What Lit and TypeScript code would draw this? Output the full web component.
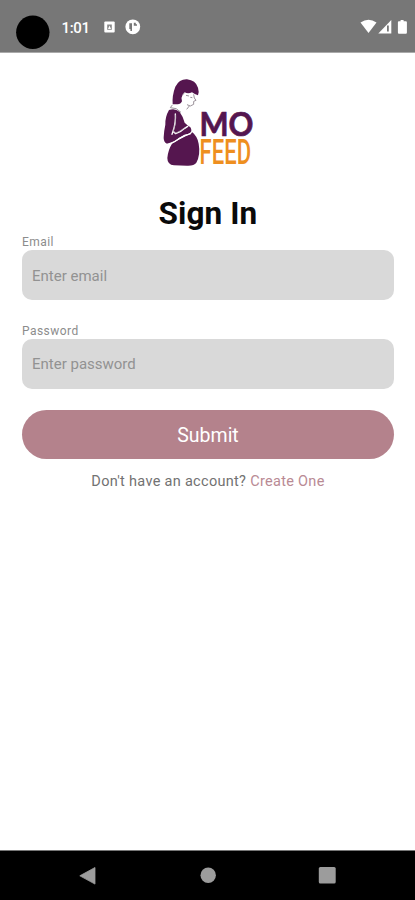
import { LitElement, html, css } from "lit";
import { customElement } from "lit/decorators.js";

@customElement("app-root")
export class AppRoot extends LitElement {
  static styles = css`
    :host {
      display: flex;
      flex-direction: column;
      height: 900px;
      width: 415px;
      background: #fff;
      font-family: Roboto, "Liberation Sans", sans-serif;
      overflow: hidden;
    }
    * { box-sizing: border-box; }
    svg { display: block; overflow: visible; }
    .status {
      flex: none;
      height: 53px;
      background: #777;
      border-bottom: 1px solid #aaa;
    }
    .clock {
      font: 500 15px Roboto, sans-serif;
      fill: #fff;
    }
    main {
      flex: 1;
      display: flex;
      flex-direction: column;
      padding: 23px 21px 0 22px;
    }
    .logo { align-self: center; }
    .mo { font: 700 33px Lato, sans-serif; fill: #55164f; stroke: #55164f; stroke-width: 0.7px; }
    .feed { font: 500 35px Roboto, sans-serif; fill: #ee8f1f; }
    h1 {
      margin: 24px 0 0;
      height: 41px;
      line-height: 39px;
      font-size: 31.5px;
      font-weight: 700;
      text-align: center;
      color: #0a0a0a;
      letter-spacing: 0.1px;
    }
    label {
      display: block;
      height: 15px;
      line-height: 15px;
      font-size: 12px;
      letter-spacing: 0.45px;
      color: #8c8c8c;
    }
    input {
      display: block;
      width: 100%;
      height: 50px;
      margin: 0 0 23.5px;
      padding: 1px 10px 0;
      border: 0;
      border-radius: 10px;
      background: #d9d9d9;
      font: 400 15px Roboto, sans-serif;
      letter-spacing: 0;
    }
    input::placeholder { color: #929292; opacity: 1; }
    button {
      height: 49px;
      margin-top: -2px;
      padding: 2px 0 0;
      border: 0;
      border-radius: 25px;
      background: #b4828c;
      color: #fff;
      font: 400 19.5px Roboto, sans-serif;
      letter-spacing: 0;
    }
    .signup {
      margin: 13px 0 0;
      line-height: 20px;
      font-size: 14.5px;
      letter-spacing: 0.3px;
      text-align: center;
      color: #727272;
    }
    .signup span { color: #b98a94; }
    nav {
      flex: none;
      height: 50px;
      background: #000;
      border-top: 1px solid #777;
    }
  `;

  render() {
    return html`
      <header class="status">
        <svg width="415" height="52" viewBox="0 0 415 52">
          <circle cx="32.8" cy="32.3" r="16.7" fill="#000" />
          <text class="clock" x="61.5" y="32.5" textLength="28.5">1:01</text>
          <rect x="104.3" y="21.5" width="10.4" height="11" rx="1" fill="#fff" />
          <path d="M107.2 29.8V24.5h4.6v5.3z" fill="#888" />
          <path d="M108 29l1.5-3.4 1.5 3.4z" fill="#fff" />
          <circle cx="132.8" cy="26.8" r="7.4" fill="#fff" />
          <path d="M129.3 23.2h2.7v7.8h-1.6v-2h-1.1zM133.8 22.8h2v1.4h1.2v1.6h-3.2z" fill="#777" />
          <path d="M360.5 22.4q8-5.4 16 0L368.5 33z" fill="#fff" />
          <path d="M378.3 33.5L391.3 20v13.5z" fill="#fff" />
          <path d="M387 25.5h1.8v6H387z" fill="#777" />
          <path d="M400.6 20h3v1.3h2.3q1 0 1 1V32.6q0 1.2-1 1.2h-7q-1 0-1-1.2V22.3q0-1 1-1h1.7z" fill="#fff" />
        </svg>
      </header>
      <main>
        <svg class="logo" width="96" height="94" viewBox="160 76 96 94">
          <g transform="translate(150 70) scale(.33333)">
            <path fill="#55164f" d="M68 103Q66 76 76 50Q88 27 111 28Q137 31 144 53Q148 65 144 76Q134 73 126 67Q114 73 104 67L98 74Q92 83 96 94Q92 103 83 103Z" />
            <path fill="none" stroke="#9a9199" stroke-width="3" stroke-linejoin="round" d="M131 73L133 84L138 91L131 94L131 103L121 108L111 104M118 108L110 118M67 105L61 113Q80 112 93 127M99 74L103 68M108 76l9 2M121 82l6 1" />
            <path fill="#55164f" d="M57 120Q75 113 89 126Q100 141 104 158L115 168Q125 171 124 184Q118 194 103 194L87 204Q66 221 51 222Q40 216 41 202Q42 182 46 164Q45 141 57 120Z" />
            <path fill="#55164f" d="M66 221Q88 208 106 199Q121 194 127 187Q142 199 146 221Q152 254 139 278Q132 288 111 287L72 286Q52 284 52 264Q54 240 66 221Z" />
            <path fill="none" stroke="#fff" stroke-width="4" stroke-linejoin="round" stroke-linecap="round" d="M76 132Q78 157 69 184L77 191Q93 186 104 175L113 169M69 184L66 193M43 224Q65 222 87 206Q104 196 122 191" />
            <path fill="none" stroke="#afa2ad" stroke-width="2" d="M77 134Q79 157 70 184L78 189Q94 182 106 172" />
          </g>
          <text class="mo" x="199.4" y="135.5" textLength="54" lengthAdjust="spacingAndGlyphs">MO</text>
          <text class="feed" x="199.6" y="164.4" textLength="51.5" lengthAdjust="spacingAndGlyphs">FEED</text>
        </svg>
        <h1>Sign In</h1>
        <label for="email">Email</label>
        <input id="email" type="email" placeholder="Enter email" />
        <label for="password">Password</label>
        <input id="password" type="password" placeholder="Enter password" />
        <button type="button">Submit</button>
        <p class="signup">Don't have an account? <span>Create One</span></p>
      </main>
      <nav>
        <svg width="415" height="49" viewBox="0 851 415 49">
          <path d="M95 867.5v16.6L79.8 875.8z" fill="#9c9c9c" stroke="#9c9c9c" stroke-width=".8" stroke-linejoin="round" />
          <circle cx="208.2" cy="875.3" r="7.7" fill="#9c9c9c" />
          <rect x="318.8" y="867" width="16.9" height="16.6" rx="1.5" fill="#9c9c9c" />
        </svg>
      </nav>
    `;
  }
}
